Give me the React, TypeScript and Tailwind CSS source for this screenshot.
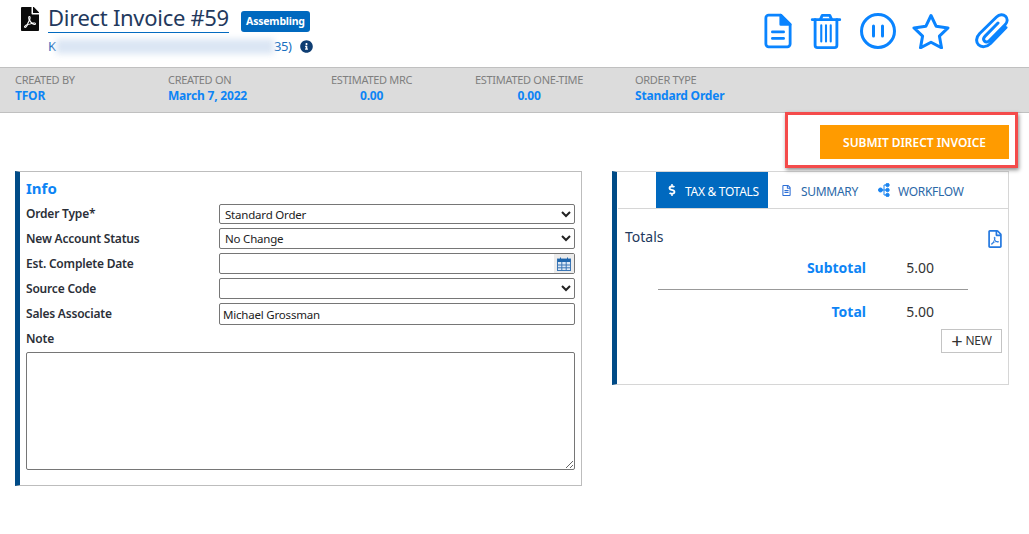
import React from "react";
import { FaFilePdf, FaInfoCircle, FaDollarSign, FaRegFileAlt, FaRegFilePdf } from "react-icons/fa";

const stats = [
  { label: "CREATED BY", value: "TFOR", w: "w-[153px]", center: false },
  { label: "CREATED ON", value: "March 7, 2022", w: "w-[163px]", center: false },
  { label: "ESTIMATED MRC", value: "0.00", w: "w-[144px]", center: true },
  { label: "ESTIMATED ONE-TIME", value: "0.00", w: "w-[160px]", center: true },
  { label: "ORDER TYPE", value: "Standard Order", w: "w-[160px]", center: false },
];

const FileIcon = () => (
  <svg width="28" height="36" viewBox="0 0 30 38" fill="none" stroke="#0a84ff" strokeWidth="3" strokeLinejoin="round" strokeLinecap="round">
    <path d="M18 2H5a3 3 0 0 0-3 3v28a3 3 0 0 0 3 3h20a3 3 0 0 0 3-3V12z" />
    <path d="M18 2v10h10z" fill="#0a84ff" />
    <path d="M9 20h12M9 27h12" />
  </svg>
);

const TrashIcon = () => (
  <svg width="32" height="36" viewBox="0 0 32 38" fill="none" stroke="#0a84ff" strokeWidth="3" strokeLinejoin="round" strokeLinecap="round">
    <path d="M1.500 7h29" />
    <path d="M10 7l2-4.500h8L22 7" />
    <path d="M4.500 7v27a2.500 2.500 0 0 0 2.500 2.500h18a2.500 2.500 0 0 0 2.500-2.500V7" />
    <path d="M11 13v17M16 13v17M21 13v17" strokeWidth="2.200" />
  </svg>
);

const PauseIcon = () => (
  <svg width="36" height="36" viewBox="0 0 36 36" fill="none" stroke="#0a84ff" strokeWidth="3" strokeLinecap="round">
    <circle cx="18" cy="18" r="16.500" />
    <path d="M13.500 13v10M22.500 13v10" />
  </svg>
);

const StarIcon = () => (
  <svg width="38" height="36" viewBox="0 0 38 36" fill="none" stroke="#0a84ff" strokeWidth="3" strokeLinejoin="round">
    <path d="M19 2.500l5.200 10.800 11.800 1.600-8.600 8.200 2.100 11.700L19 29.200 8.500 34.800l2.100-11.700L2 14.900l11.800-1.600z" />
  </svg>
);

const ClipIcon = () => (
  <svg width="34" height="36" viewBox="0 0 34 36" fill="none" stroke="#0a84ff" strokeWidth="3" strokeLinecap="round" strokeLinejoin="round">
    <path d="M31 14.500L15.500 30.500c-3.800 3.900-9.300 4-12 1.300-2.800-2.800-2.500-7.500 1.200-11.300L21.500 4c3-3 6.700-3 9-.7 2.300 2.300 2.200 5.800-.7 8.800L14.500 27.500c-1.700 1.700-3.700 1.900-5 .6-1.300-1.300-1-3.300.6-5L23 10" />
  </svg>
);

const CalendarIcon = () => (
  <svg width="14" height="14" viewBox="0 0 14 14" fill="none">
    <rect x="0.500" y="2" width="13" height="11.500" fill="#dbe8f6" stroke="#3b76b5" />
    <rect x="0.500" y="2" width="13" height="3" fill="#1f66ad" />
    <path d="M0.500 8h13M0.500 10.800h13M4.800 5v8.500M9.200 5v8.500" stroke="#3b76b5" />
    <path d="M3.500 0.500v2.500M10.500 0.500v2.500" stroke="#1f66ad" />
  </svg>
);

const WorkflowIcon = () => (
  <svg width="12" height="14" viewBox="0 0 12 14" fill="#1b84f0" stroke="#1b84f0">
    <circle cx="2.500" cy="7" r="2" />
    <circle cx="9.500" cy="2" r="1.700" />
    <circle cx="9.500" cy="7" r="1.700" />
    <circle cx="9.500" cy="12" r="1.700" />
    <path d="M2.500 7H9.500M6 7V2h3.500M6 7v5h3.500" fill="none" strokeWidth="1" />
  </svg>
);

const Label = ({ children }: { children: React.ReactNode }) => (
  <span className="block self-center text-[12px] font-semibold text-[#2b2f38] leading-none tracking-[-0.2px]">{children}</span>
);

const fieldCls =
  "w-full h-full border border-[#767676] rounded-[2px] bg-white text-[11.5px] tracking-[-0.2px] text-[#222] outline-none";

export default function App() {
  return (
    <div className="w-[1029px] h-[534px] bg-white overflow-hidden relative font-['Noto_Sans','Open_Sans',sans-serif]">
      {/* header */}
      <div className="h-[67px] flex justify-between">
        <div className="flex items-start pl-[20px] pt-[7px]">
          <FaFilePdf className="text-[#0b0b0b] text-[24px] w-[20px]" />
          <div className="ml-[8px]">
            <div className="flex items-center mt-[-2px]">
              <span className="text-[22px] leading-[24px] pb-[3px] text-[#23395d] border-b border-[#0069bf] whitespace-nowrap tracking-[-0.3px]">
                Direct Invoice #59
              </span>
              <span className="ml-[12px] mt-[5px] h-[21px] w-[69px] flex items-center justify-center bg-[#0069bf] rounded-[3px] text-white text-[10.5px] tracking-[-0.2px] font-bold whitespace-nowrap">
                Assembling
              </span>
            </div>
            <div className="flex items-center mt-[5px] text-[13px] leading-[16px] text-[#1a6fc0]">
              <span>K</span>
              <span className="w-[218px] h-[15px] bg-[#dbe6f4] blur-[3px]" />
              <span className="tracking-[-0.5px]">35)</span>
              <FaInfoCircle className="ml-[9px] text-[13px] text-[#0f3e73]" />
            </div>
          </div>
        </div>
        <div className="flex items-start pt-[13px] pr-[20px]">
          <div className="mr-[18px]"><FileIcon /></div>
          <div className="mr-[18px]"><TrashIcon /></div>
          <div className="mr-[16px]"><PauseIcon /></div>
          <div className="mr-[25px]"><StarIcon /></div>
          <ClipIcon />
        </div>
      </div>

      {/* summary bar */}
      <div className="h-[46px] bg-[#dcdcdc] border-y border-[#c0c0c0] pl-[15px] pt-[4px] flex">
        {stats.map((s) => (
          <div key={s.label} className={s.w}>
            <div className={"flex flex-col w-fit " + (s.center ? "items-center" : "items-start")}>
              <span className="text-[11px] leading-[15px] text-[#7f7f7f] whitespace-nowrap tracking-[-0.3px]">{s.label}</span>
              <span className="mt-[1px] text-[12px] leading-[16px] font-bold text-[#0d84f5] whitespace-nowrap tracking-[-0.2px]">{s.value}</span>
            </div>
          </div>
        ))}
      </div>

      {/* action row */}
      <div className="flex justify-end pr-[20px] pt-[12px] h-[58px]">
        <button className="w-[189px] h-[34px] pt-[1px] bg-[#ff9b00] text-white text-[12px] font-semibold whitespace-nowrap tracking-[-0.05px]">
          SUBMIT DIRECT INVOICE
        </button>
      </div>

      {/* highlight annotation */}
      <div className="absolute left-[785px] top-[112px] w-[233px] h-[56px] border-[3px] border-[#f44b4b] shadow-[1px_2px_4px_rgba(0,0,0,0.45)]" />

      {/* panels */}
      <div className="flex items-start pl-[15px]">
        <div className="w-[567px] h-[315px] border-[1px] border-[#bdbdbd] border-l-[5px] border-l-[#004b87] pl-[6px] pr-[6px]">
          <h2 className="text-[15px] leading-[20px] font-bold text-[#0d84f5] mt-[6px]">Info</h2>
          <div className="mt-[6px] grid grid-cols-[193px_356px] grid-rows-[20px_21px_21px_21px_22px] gap-y-[4px]">
            <Label>Order Type*</Label>
            <select className={fieldCls + " pl-[1px]"} defaultValue="Standard Order">
              <option>Standard Order</option>
            </select>
            <Label>New Account Status</Label>
            <select className={fieldCls + " pl-[1px]"} defaultValue="No Change">
              <option>No Change</option>
            </select>
            <Label>Est. Complete Date</Label>
            <div className="flex border border-[#767676] rounded-[2px] h-full">
              <div className="flex-1" />
              <div className="w-[20px] bg-[#ececec] flex items-center justify-center"><CalendarIcon /></div>
            </div>
            <Label>Source Code</Label>
            <select className={fieldCls + " pl-[1px]"}>
              <option></option>
            </select>
            <Label>Sales Associate</Label>
            <input className={fieldCls + " px-[3px]"} defaultValue="Michael Grossman" />
          </div>
          <div className="mt-[8px] leading-none"><Label>Note</Label></div>
          <textarea className="block mt-[7px] w-[549px] h-[118px] border border-[#767676] rounded-[2px] outline-none" />
        </div>

        <div className="ml-[30px] w-[397px] h-[214px] border border-[#d6d6d6] border-l-[5px] border-l-[#004b87]">
          <div className="h-[37px] border-b border-[#d6d6d6] ml-[1px] pl-[38px] flex text-[12px] text-[#2a68a8] tracking-[-0.3px]">
            <div className="w-[112px] h-[36px] bg-[#0069bf] text-white flex items-center pl-[10px]">
              <FaDollarSign className="text-[12px]" />
              <span className="ml-[7px] pt-[3px] whitespace-nowrap">TAX &amp; TOTALS</span>
            </div>
            <div className="flex items-center ml-[13px]">
              <FaRegFileAlt className="text-[11px] text-[#2d6fd6]" />
              <span className="ml-[9px] pt-[3px] whitespace-nowrap">SUMMARY</span>
            </div>
            <div className="flex items-center ml-[20px]">
              <WorkflowIcon />
              <span className="ml-[8px] pt-[3px] whitespace-nowrap">WORKFLOW</span>
            </div>
          </div>
          <div className="flex justify-between items-start pl-[8px] pr-[4px] pt-[18px]">
            <span className="text-[14px] leading-[19px] text-[#23395d]">Totals</span>
            <FaRegFilePdf className="text-[#2378e0] text-[18px] mt-[3px]" />
          </div>
          <div className="mt-[10px] grid grid-cols-[249px_68px] items-center">
            <span className="text-[14px] leading-[20px] font-bold text-[#0d84f5] text-right">Subtotal</span>
            <span className="text-[14px] leading-[20px] text-[#333] text-right">5.00</span>
          </div>
          <div className="ml-[41px] mt-[11px] w-[310px] border-t border-[#999]" />
          <div className="mt-[12px] grid grid-cols-[249px_68px] items-center">
            <span className="text-[14px] leading-[20px] font-bold text-[#0d84f5] text-right">Total</span>
            <span className="text-[14px] leading-[20px] text-[#333] text-right">5.00</span>
          </div>
          <div className="flex justify-end pr-[6px] mt-[7px]">
            <button className="w-[61px] h-[24px] border border-[#c4c4c4] flex items-center justify-center text-[12px] text-[#333] tracking-[-0.2px]">
              <span className="text-[20px] leading-none mr-[3px]">+</span>NEW
            </button>
          </div>
        </div>
      </div>
    </div>
  );
}
